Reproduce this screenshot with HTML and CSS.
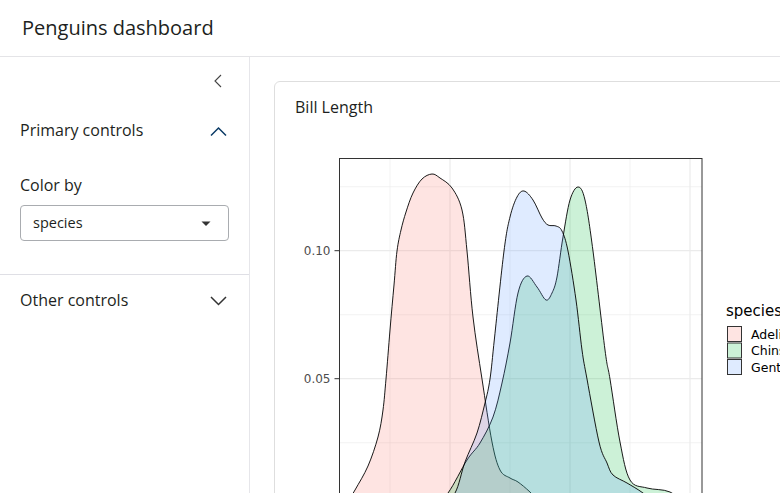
FILE: index.html
```html
<!DOCTYPE html>
<html lang="en">
<head>
<meta charset="utf-8">
<title>Penguins dashboard</title>
<link rel="stylesheet" href="styles.css">
</head>
<body>
<header class="navbar">
  <h1 class="brand">Penguins dashboard</h1>
</header>
<div class="layout">
  <aside class="sidebar">
    <div class="collapse-row">
      <svg class="icon-collapse" width="16" height="16" viewBox="0 0 16 16"><path d="M11 2 L5 8 L11 14" fill="none" stroke="#444" stroke-width="1.1"/></svg>
    </div>
    <div class="acc-item">
      <div class="acc-header first">
        <span class="acc-title">Primary controls</span>
        <svg class="chev" width="18" height="24" viewBox="0 0 18 24"><path d="M2 17.5 L9.5 10 L17 17.5" fill="none" stroke="#0b3b66" stroke-width="1.5"/></svg>
      </div>
      <div class="acc-body">
        <label class="field-label">Color by</label>
        <div class="select">
          <span class="select-value">species</span>
          <svg class="caret" width="10" height="6" viewBox="0 0 10 6"><path d="M0.5 0.5 L9.5 0.5 L5 5 Z" fill="#333"/></svg>
        </div>
      </div>
    </div>
    <div class="acc-item bordered">
      <div class="acc-header second">
        <span class="acc-title">Other controls</span>
        <svg class="chev" width="18" height="24" viewBox="0 0 18 24"><path d="M2 9 L9.5 16.5 L17 9" fill="none" stroke="#333" stroke-width="1.5"/></svg>
      </div>
    </div>
  </aside>
  <main class="main">
    <section class="card">
      <div class="card-header">Bill Length</div>
      <div class="card-body">
        <svg class="plot" width="585" height="380" viewBox="275 117 585 380">
          <rect x="339.5" y="158.5" width="362.5" height="360" fill="#fff"/>
          <g stroke="#ebebeb">
            <line x1="339.5" x2="702" y1="186.7" y2="186.7" stroke-width="0.6"/>
            <line x1="339.5" x2="702" y1="314.7" y2="314.7" stroke-width="0.6"/>
            <line x1="339.5" x2="702" y1="442.7" y2="442.7" stroke-width="0.6"/>
            <line x1="390" x2="390" y1="158.5" y2="520" stroke-width="0.6"/>
            <line x1="510" x2="510" y1="158.5" y2="520" stroke-width="0.6"/>
            <line x1="630" x2="630" y1="158.5" y2="520" stroke-width="0.6"/>
            <line x1="339.5" x2="702" y1="250.7" y2="250.7" stroke-width="1.2"/>
            <line x1="339.5" x2="702" y1="378.7" y2="378.7" stroke-width="1.2"/>
            <line x1="450" x2="450" y1="158.5" y2="520" stroke-width="1.2"/>
            <line x1="570" x2="570" y1="158.5" y2="520" stroke-width="1.2"/>
            <line x1="690" x2="690" y1="158.5" y2="520" stroke-width="1.2"/>
          </g>
          <g stroke="#000" stroke-width="0.9" stroke-linejoin="round">
            <path fill="#F8766D" fill-opacity="0.2" d="M345,507 C348,501 351.2,496.8 355,490 S364.2,474.8 368,466 S375.5,446.3 378,437 S381.7,419.7 383,410 S384.8,392.3 386,379 S388.7,345.7 390,330 S392.8,298.2 394,285 S395.8,260.2 397,251 S399.5,236.5 401,230 S404,218.2 406,212 S410.3,198.5 413,193 S418.8,182.2 422,179 S429,174.2 432,174 S436.7,175.7 440,178 S448.3,182.7 452,188 S459.5,199.5 462,210 S465.2,233.2 467,251 S470.5,295.7 473,317 S478.8,358.2 482,379 S489,426.8 492,442 S497,464 500,470 S507,476 510,478 S514.7,479.7 518,482 S525.5,487.8 530,492 S540,503 545,507 Z"/>
            <path fill="#00BA38" fill-opacity="0.2" d="M432,507 C437,503 442.2,500.8 448,493 S461.7,468.3 467,460 S475.7,450.2 480,443 S489.3,427 493,417 S499.2,395.3 502,383 S507.3,358 510,343 S515.2,304.2 518,293 S523.8,277 527,276 S533.8,283 537,287 S543.5,299 546,300 S550.2,296.8 552,293 S555.2,286.3 557,277 S560.8,249.8 563,237 S567.5,208.3 570,200 S575.5,187 578,187 S582.5,189.3 585,200 S589.7,226 593,251 S602.2,328.7 605,350 S607.5,363.7 610,379 S616.7,425.2 620,442 S625.5,472.3 630,480 S640.3,486 647,488 S662.8,488.8 670,492 S684,502 690,507 Z"/>
            <path fill="#619CFF" fill-opacity="0.2" d="M440,507 C445,503 450.8,500.5 455,493 S461.3,472 465,462 S473.7,442.8 477,433 S482.8,412 485,403 S488.4,389.8 490,379 S492.2,359.3 494.5,338 S501.4,271.2 504,251 S507.8,226 510,217 S514.7,201.3 517,197 S521.3,190.5 524,191 S530,195.5 533,200 S539.5,213.8 542,218 S545.7,223.7 548,225 S553.7,225 556,226 S560,226.8 562,231 S565.7,239.5 568,251 S573.7,283.5 576,300 S580.2,336.8 582,350 S584.2,363.7 587,379 S595.7,428 599,442 S604.7,457.5 607,463 S609.7,471.7 613,475 S622,480 627,483 S637.5,489 643,493 S655,503 660,507 Z"/>
          </g>
          <rect x="339.5" y="158.5" width="362.5" height="360" fill="none" stroke="#333" stroke-width="1"/>
          <g stroke="#333" stroke-width="1">
            <line x1="334.5" x2="339.5" y1="250.7" y2="250.7"/>
            <line x1="334.5" x2="339.5" y1="378.7" y2="378.7"/>
          </g>
          <g class="tick">
            <text x="330.5" y="255">0.10</text>
            <text x="330.5" y="383">0.05</text>
          </g>
          <text class="leg-title" x="726" y="316">species</text>
          <g stroke="#333" stroke-width="1">
            <rect x="727.5" y="326.5" width="14" height="15" fill="#fee4e2"/>
            <rect x="727.5" y="343" width="14" height="15" fill="#ccf1d7"/>
            <rect x="727.5" y="359.5" width="14" height="15" fill="#dfebff"/>
          </g>
          <g class="leg-label">
            <text x="751" y="338.5">Adelie</text>
            <text x="751" y="355">Chinstrap</text>
            <text x="751" y="371.5">Gentoo</text>
          </g>
        </svg>
      </div>
    </section>
  </main>
</div>
</body>
</html>
```

FILE: styles.css
```css
html, body {
  margin: 0;
  padding: 0;
}
body {
  width: 780px;
  height: 493px;
  overflow: hidden;
  background: #fff;
  color: #1d1f21;
  font-family: "Open Sans", "Noto Sans", sans-serif;
  font-size: 16px;
  line-height: 24px;
}
.navbar {
  height: 57px;
  box-sizing: border-box;
  border-bottom: 1px solid #e4e4e7;
  padding: 16px 22px 0;
}
.brand {
  margin: 0;
  font-size: 20px;
  font-weight: 400;
  line-height: 24px;
}
.layout {
  display: flex;
  height: 436px;
}
.sidebar {
  width: 249px;
  flex-shrink: 0;
  border-right: 1px solid #e6e6ea;
  display: flex;
  flex-direction: column;
}
.collapse-row {
  height: 48px;
  display: flex;
  justify-content: flex-end;
  align-items: center;
  padding-right: 23px;
}
.acc-header {
  display: flex;
  justify-content: space-between;
  align-items: flex-start;
  padding: 13px 22px 15px 20px;
}
.acc-header.second {
  padding-top: 13px;
}
.chev {
  overflow: visible;
}
.acc-body {
  padding: 16px 20px 33px;
  display: flex;
  flex-direction: column;
}
.acc-item.bordered {
  border-top: 1px solid #dfdfe5;
}
.field-label {
  margin-bottom: 8px;
}
.select {
  height: 36px;
  box-sizing: border-box;
  border: 1px solid #a9acb0;
  border-radius: 4px;
  display: flex;
  align-items: center;
  justify-content: space-between;
  padding: 0 17px 0 12px;
}
.select-value {
  font-size: 14.5px;
}
.caret {
  margin-top: 1px;
}
.main {
  flex: 1;
  min-width: 0;
  padding: 24px 0 0 24px;
  overflow: hidden;
}
.card {
  width: 600px;
  height: 460px;
  box-sizing: border-box;
  border: 1px solid #dedede;
  border-radius: 6px;
  overflow: hidden;
}
.card-header {
  padding: 13px 20px 0;
  height: 35px;
  box-sizing: border-box;
}
.card-body {
  display: flex;
}
.plot {
  display: block;
  font-family: "DejaVu Sans", sans-serif;
}
.tick text {
  font-size: 12px;
  fill: #4d4d4d;
  text-anchor: end;
}
.leg-title {
  font-size: 15px;
  fill: #000;
}
.leg-label text {
  font-size: 12.5px;
  fill: #000;
}
```
